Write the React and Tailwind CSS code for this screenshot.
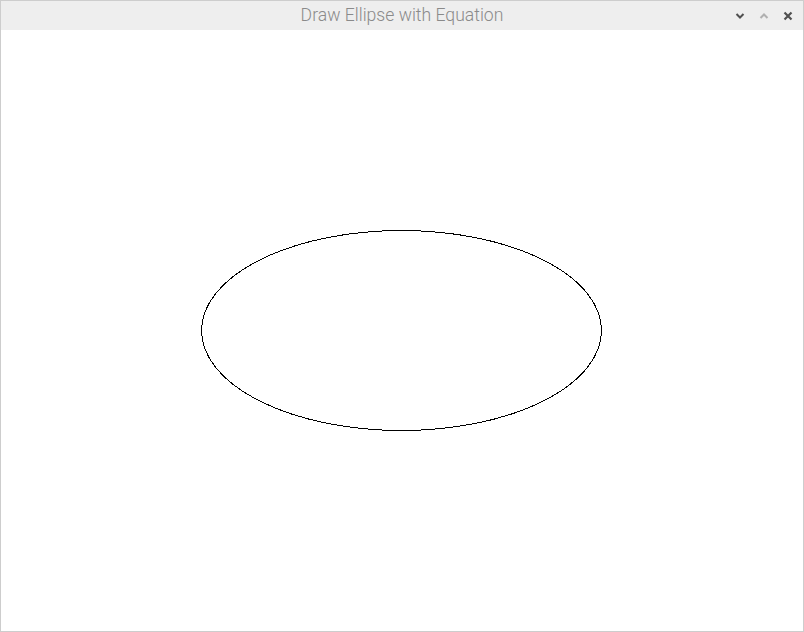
export default function App() {
  return (
    <div className="w-[804px] h-[632px] flex flex-col bg-white border border-[#cdcdcd] overflow-hidden">
      <div className="h-[29px] shrink-0 bg-[#eeeeee] relative flex items-center justify-center">
        <span className="text-[17.6px] leading-none text-[#8a8a8a] font-light" style={{ fontFamily: "Roboto, 'Noto Sans', sans-serif" }}>
          Draw Ellipse with Equation
        </span>
        <div className="absolute right-[10px] top-0 h-full flex items-center gap-[14px]">
          <svg width="10" height="10" viewBox="0 0 10 10">
            <path d="M1.5 3 L5 6.5 L8.5 3" fill="none" stroke="#505050" strokeWidth="2" />
          </svg>
          <svg width="10" height="10" viewBox="0 0 10 10">
            <path d="M1.5 7 L5 3.5 L8.5 7" fill="none" stroke="#b0b0b0" strokeWidth="2" />
          </svg>
          <svg width="10" height="10" viewBox="0 0 10 10">
            <path d="M1.5 1.5 L8.5 8.5 M8.5 1.5 L1.5 8.5" fill="none" stroke="#505050" strokeWidth="2.2" />
          </svg>
        </div>
      </div>
      <div className="flex-1 bg-white">
        <svg width="802" height="601" viewBox="0 0 802 601" shapeRendering="crispEdges">
          <ellipse cx="400.5" cy="300.5" rx="200" ry="100" fill="none" stroke="#000" strokeWidth="1" />
        </svg>
      </div>
    </div>
  );
}
